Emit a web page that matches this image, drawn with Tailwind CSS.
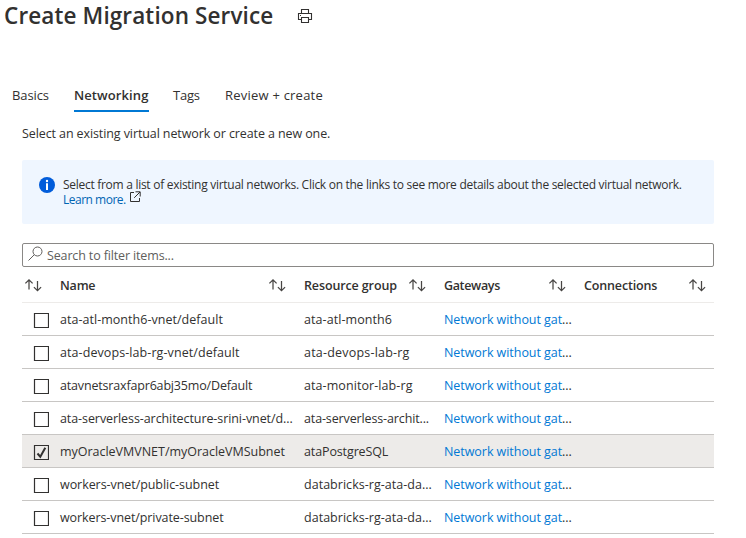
<!DOCTYPE html>
<html lang="en">
<head>
<meta charset="utf-8">
<title>Create Migration Service</title>
<script src="https://cdn.jsdelivr.net/npm/@tailwindcss/browser@4"></script>
</head>
<body class="h-[538px] w-[746px] overflow-hidden bg-white font-['Open_Sans','Noto_Sans',sans-serif] text-[12.5px] leading-[16px] text-[#323130]">
<svg class="hidden">
  <symbol id="sort" viewBox="0 0 18 14"><path d="M5 11.500V2M1.400 5.400 5 1.800l3.600 3.600M13.500 3v9.500M9.900 9.100l3.600 3.600 3.600-3.600" fill="none" stroke="#484644" stroke-width="1.250"/></symbol>
</svg>
<header class="flex h-8 items-center pl-1">
  <h1 class="w-[269px] text-[22.5px] font-semibold leading-8 whitespace-nowrap tracking-[0.12px]">Create Migration Service</h1>
  <svg class="ml-6 size-4" viewBox="0 0 16 16" fill="none" stroke="#323130" stroke-width="1.100"><path d="M4.500 5.500v-4h7v4M4 11.500H1.500v-6h13v6H12M4.500 9.500h7v5h-7zM4 9.500h8M3 7.500h1"/></svg>
</header>
<nav class="mt-12 flex h-8 pl-3 text-[13px] leading-[30px] whitespace-nowrap">
  <span class="mr-[25px] w-[37px] tracking-[-0.1px]">Basics</span>
  <span class="mr-6 w-[75px] border-b-2 border-[#0078d4] font-semibold tracking-[0.1px]">Networking</span>
  <span class="mr-6 w-7 tracking-[-0.2px]">Tags</span>
  <span class="tracking-[0.22px]">Review + create</span>
</nav>
<main class="ml-[22px] w-[692px]">
  <p class="mt-[14px] h-4 whitespace-nowrap tracking-[-0.1px]">Select an existing virtual network or create a new one.</p>
  <section class="mt-[18px] flex h-16 rounded-xs bg-[#eff6ff] pt-[17px] pl-[17px]">
    <svg class="mr-2 size-4 shrink-0" viewBox="0 0 16 16"><circle cx="8" cy="8" r="8" fill="#015cda"/><circle cx="8" cy="4" r="1.200" fill="#fff"/><path d="M8 6.300v6.700" stroke="#fff" stroke-width="2"/></svg>
    <div class="text-[12px] leading-[15px] whitespace-nowrap">
      <p class="tracking-[-0.283px]">Select from a list of existing virtual networks. Click on the links to see more details about the selected virtual network.</p>
      <p class="flex"><a class="w-[62px] tracking-[-0.5px] text-[#0065b3]">Learn more.</a><svg class="ml-1 -mt-[1px] size-3" viewBox="0 0 12 12" fill="none" stroke="#323130"><path d="M5 1.500H1.500v9h9V7M6.500 .8h4.700v4.700M11 1 5.200 6.800"/></svg></p>
    </div>
  </section>
  <div class="mt-[19px] flex h-6 items-center rounded-xs border border-[#8a8886] pl-[5px] text-[#605e5c]">
    <svg class="mr-1 -mt-1 size-[15px]" viewBox="0 0 15 15" fill="none" stroke="#605e5c"><circle cx="9.500" cy="5.500" r="4.500"/><path d="M6.300 8.700.5 14.500"/></svg>
    <span class="pt-px tracking-[-0.14px]">Search to filter items...</span>
  </div>
  <div class="grid h-9 grid-cols-[38px_208px_36px_104px_36px_104px_36px_104px_1fr] items-center border-b border-[#edebe9] pt-px font-semibold whitespace-nowrap">
    <svg class="ml-[2px] h-[14px] w-[18px]"><use href="#sort"/></svg>
    <span class="pt-[2px] tracking-[-0.2px]">Name</span>
    <svg class="h-[14px] w-[18px]"><use href="#sort"/></svg>
    <span class="pt-[2px] tracking-[-0.12px]">Resource group</span>
    <svg class="h-[14px] w-[18px]"><use href="#sort"/></svg>
    <span class="pt-[2px] tracking-[-0.35px]">Gateways</span>
    <svg class="h-[14px] w-[18px]"><use href="#sort"/></svg>
    <span class="pt-[2px] tracking-[-0.15px]">Connections</span>
    <svg class="h-[14px] w-[18px]"><use href="#sort"/></svg>
  </div>
  <div id="rows"></div>
</main>
<script>
// Each row: name, name tracking, resource group, group tracking, selected
const rows = [
  ['ata-atl-month6-vnet/default', 'tracking-[0.03px]', 'ata-atl-month6', 'tracking-[0.07px]'],
  ['ata-devops-lab-rg-vnet/default', 'tracking-[0.08px]', 'ata-devops-lab-rg', 'tracking-[0.2px]'],
  ['atavnetsraxfapr6abj35mo/Default', 'tracking-[-0.17px]', 'ata-monitor-lab-rg', 'tracking-[0.08px]'],
  ['ata-serverless-architecture-srini-vnet/d...', 'tracking-[-0.08px]', 'ata-serverless-archit...', 'tracking-[-0.13px]'],
  ['myOracleVMVNET/myOracleVMSubnet', 'tracking-[-0.02px]', 'ataPostgreSQL', 'tracking-[-0.12px]', true],
  ['workers-vnet/public-subnet', 'tracking-[-0.06px]', 'databricks-rg-ata-da...', 'tracking-[0.03px]'],
  ['workers-vnet/private-subnet', 'tracking-[-0.09px]', 'databricks-rg-ata-da...', 'tracking-[0.03px]'],
];
document.getElementById('rows').innerHTML = rows.map(([name, nameFit, group, groupFit, on]) => `
  <div class="grid h-[33px] grid-cols-[38px_244px_140px_1fr] items-center border-b border-[#c8c6c4] pt-[2px] whitespace-nowrap ${on ? 'bg-[#edebe9]' : ''}">
    <svg class="ml-[11px] size-4" viewBox="0 0 16 16" fill="none" stroke="#323130"><path d="M1.500 1.500h14v14h-14z" stroke-width="1.200"/>${on ? '<path d="M4.500 9.500 7.300 12.700 12.300 3.800" stroke-width="2"/>' : ''}</svg>
    <span class="${nameFit}">${name}</span>
    <span class="${groupFit}">${group}</span>
    <span class="tracking-[-0.05px]"><a class="text-[#0078d4]">Network without gat</a>...</span>
  </div>`).join('');
</script>
</body>
</html>
